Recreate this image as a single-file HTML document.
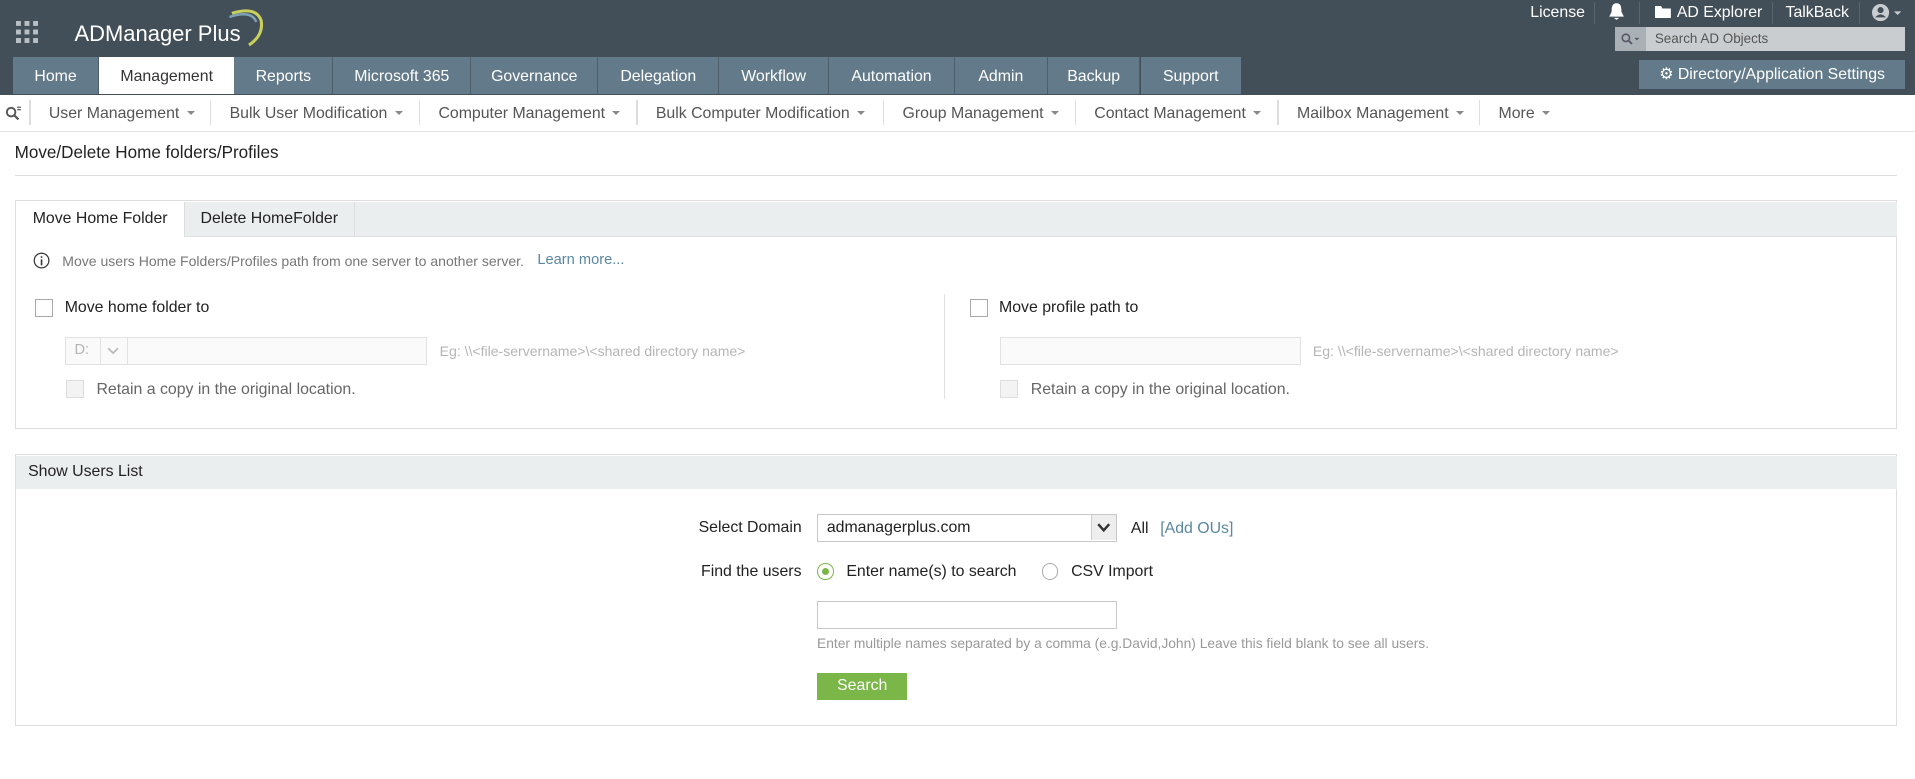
<!DOCTYPE html>
<html><head><meta charset="utf-8"><style>
html,body{margin:0;padding:0;background:#fff;}
body{width:1568px;height:638px;zoom:1.2213;position:relative;overflow:hidden;font-family:"Liberation Sans",sans-serif;font-size:13px;color:#333;}
.a{position:absolute;white-space:nowrap;}
.hdr{position:absolute;left:0;top:0;width:1568px;height:78px;background:#434f58;}
.tab{position:absolute;top:47px;height:30px;line-height:32px;background:#627a89;color:#fff;text-align:center;border-right:1px solid #4d5f6b;}
.sub{position:absolute;top:93px;transform:translateY(-50%);color:#555;}
.car{display:inline-block;width:0;height:0;border-left:4px solid transparent;border-right:4px solid transparent;border-top:4px solid #888;margin-left:6px;vertical-align:middle;}
.vs{position:absolute;top:82px;width:1px;height:20px;background:#ddd;}
.cb{position:absolute;width:13px;height:13px;border:1px solid #aaa;background:#fff;}
.gray{color:#b5b5b5;}
</style></head><body>
<div class="hdr"></div>
<svg class="a" style="left:13px;top:17px" width="18" height="18"><g fill="#b8c0c6"><rect x="0" y="0" width="4" height="4"/><rect x="7" y="0" width="4" height="4"/><rect x="14" y="0" width="4" height="4"/><rect x="0" y="7" width="4" height="4"/><rect x="7" y="7" width="4" height="4"/><rect x="14" y="7" width="4" height="4"/><rect x="0" y="14" width="4" height="4"/><rect x="7" y="14" width="4" height="4"/><rect x="0" y="14" width="4" height="4"/><rect x="14" y="14" width="4" height="4"/></g></svg>
<div class="a" style="left:61px;top:17px;font-size:18px;color:#fff;">ADManager Plus</div>
<svg class="a" style="left:186px;top:5px" width="34" height="36"><path d="M4 6 Q24 0 28 12 Q30 24 18 32" stroke="#c8cf5a" stroke-width="2.5" fill="none"/><path d="M2 9 Q20 3 24 13" stroke="#7ea3b5" stroke-width="2" fill="none"/></svg>
<div class="a" style="left:1253px;top:3px;color:#fff;">License</div>
<div class="a" style="left:1305px;top:2px;width:1px;height:18px;background:#5a666e"></div>
<svg class="a" style="left:1317px;top:2px" width="14" height="16"><path d="M7 1 C3 1 3 5 3 8 L1 12 L13 12 L11 8 C11 5 11 1 7 1Z M5 13 Q7 16 9 13Z" fill="#fff"/></svg>
<div class="a" style="left:1342px;top:2px;width:1px;height:18px;background:#5a666e"></div>
<svg class="a" style="left:1355px;top:5px" width="13" height="10"><path d="M0 0 H5 L6 2 H13 V10 H0Z" fill="#fff"/></svg>
<div class="a" style="left:1373px;top:3px;color:#fff;">AD Explorer</div>
<div class="a" style="left:1451px;top:2px;width:1px;height:18px;background:#5a666e"></div>
<div class="a" style="left:1462px;top:3px;color:#fff;">TalkBack</div>
<div class="a" style="left:1522px;top:2px;width:1px;height:18px;background:#5a666e"></div>
<svg class="a" style="left:1533px;top:3px" width="26" height="14"><circle cx="7" cy="7" r="7" fill="#c9cdd0"/><circle cx="7" cy="5" r="2.5" fill="#434f58"/><path d="M2.5 11 Q7 6 11.5 11" fill="#434f58"/><path d="M18 6 H24 L21 9Z" fill="#c9cdd0"/></svg>
<div class="a" style="left:1322px;top:22px;width:238px;height:20px;background:#c9cdd0;"></div>
<div class="a" style="left:1322px;top:22px;width:26px;height:20px;background:#aab1b6;"></div>
<svg class="a" style="left:1327px;top:27px" width="16" height="10"><circle cx="4" cy="4" r="3" stroke="#556" stroke-width="1.3" fill="none"/><path d="M6 6 L9 9" stroke="#556" stroke-width="1.5"/><path d="M11 4 H15 L13 6Z" fill="#556"/></svg>
<div class="a" style="left:1355px;top:25px;font-size:11px;color:#555;">Search AD Objects</div>
<div class="tab" style="left:11px;width:69px;">Home</div>
<div class="tab" style="left:81px;width:111px;background:#fff;color:#333;border:none;">Management</div>
<div class="tab" style="left:192px;width:80px;">Reports</div>
<div class="tab" style="left:273px;width:112px;">Microsoft 365</div>
<div class="tab" style="left:386px;width:103px;">Governance</div>
<div class="tab" style="left:490px;width:98px;">Delegation</div>
<div class="tab" style="left:589px;width:89px;">Workflow</div>
<div class="tab" style="left:679px;width:102px;">Automation</div>
<div class="tab" style="left:782px;width:75px;">Admin</div>
<div class="tab" style="left:858px;width:75px;">Backup</div>
<div class="tab" style="left:934px;width:82px;border:none;">Support</div>
<div class="a" style="left:1342px;top:49px;width:218px;height:24px;line-height:25px;background:#627a89;color:#fff;text-align:center;">&#9881; Directory/Application Settings</div>
<div class="a" style="left:0;top:107px;width:1568px;height:1px;background:#e2e2e2"></div>
<svg class="a" style="left:4px;top:87px" width="13" height="12"><circle cx="5" cy="5" r="3.5" stroke="#555" stroke-width="1.6" fill="none"/><path d="M7.5 7.5 L11 11" stroke="#555" stroke-width="1.8"/><path d="M10 1 H13 M10 3 H13" stroke="#555"/></svg>
<div class="vs" style="left:24px"></div>
<div class="sub" style="left:40px">User Management<span class="car"></span></div>
<div class="vs" style="left:172px"></div>
<div class="sub" style="left:188px">Bulk User Modification<span class="car"></span></div>
<div class="vs" style="left:343px"></div>
<div class="sub" style="left:359px">Computer Management<span class="car"></span></div>
<div class="vs" style="left:521px"></div>
<div class="sub" style="left:537px">Bulk Computer Modification<span class="car"></span></div>
<div class="vs" style="left:723px"></div>
<div class="sub" style="left:739px">Group Management<span class="car"></span></div>
<div class="vs" style="left:880px"></div>
<div class="sub" style="left:896px">Contact Management<span class="car"></span></div>
<div class="vs" style="left:1046px"></div>
<div class="sub" style="left:1062px">Mailbox Management<span class="car"></span></div>
<div class="vs" style="left:1211px"></div>
<div class="sub" style="left:1227px">More<span class="car"></span></div>
<div class="a" style="left:12px;top:117px;font-size:14px;color:#222;">Move/Delete Home folders/Profiles</div>
<div class="a" style="left:12px;top:143px;width:1541px;height:1px;background:#ddd"></div>

<div class="a" style="left:12px;top:164px;width:1540px;height:186px;border:1px solid #ddd;"></div>
<div class="a" style="left:13px;top:165px;width:1540px;height:28px;background:#ebeeef;border-bottom:1px solid #e0e0e0;"></div>
<div class="a" style="left:13px;top:165px;width:138px;height:29px;background:#fff;border-right:1px solid #ddd;line-height:28px;text-align:center;color:#222;">Move Home Folder</div>
<div class="a" style="left:151px;top:165px;width:139px;height:28px;line-height:28px;text-align:center;color:#222;border-right:1px solid #ddd;">Delete HomeFolder</div>
<svg class="a" style="left:27px;top:206px" width="14" height="14"><circle cx="7" cy="7" r="6" stroke="#333" fill="none"/><path d="M7 6 V11 M7 3.5 V4.8" stroke="#333" stroke-width="1.3"/></svg>
<div class="a" style="left:51px;top:207px;font-size:11.5px;color:#777;">Move users Home Folders/Profiles path from one server to another server.</div>
<div class="a" style="left:440px;top:206px;font-size:12px;color:#5b87a0;">Learn more...</div>
<div class="cb" style="left:29px;top:245px;"></div>
<div class="a" style="left:53px;top:245px;color:#222;">Move home folder to</div>
<div class="a" style="left:773px;top:241px;width:1px;height:86px;background:#e0e0e0"></div>
<div class="a" style="left:53px;top:276px;width:295px;height:21px;border:1px solid #e2e2e2;background:#fafafa;"></div>
<div class="a" style="left:82px;top:276px;width:1px;height:23px;background:#e2e2e2"></div>
<div class="a" style="left:104px;top:276px;width:1px;height:23px;background:#e2e2e2"></div>
<div class="a gray" style="left:61px;top:280px;font-size:12px;">D:</div>
<svg class="a" style="left:88px;top:284px" width="10" height="7"><path d="M1 1 L5 5 L9 1" stroke="#bbb" stroke-width="1.5" fill="none"/></svg>
<div class="a gray" style="left:360px;top:281px;font-size:11.5px;">Eg: \\&lt;file-servername&gt;\&lt;shared directory name&gt;</div>
<div class="cb" style="left:54px;top:311px;border-color:#ddd;background:#f3f3f3;"></div>
<div class="a" style="left:79px;top:312px;color:#666;">Retain a copy in the original location.</div>
<div class="cb" style="left:794px;top:245px;"></div>
<div class="a" style="left:818px;top:245px;color:#222;">Move profile path to</div>
<div class="a" style="left:819px;top:276px;width:245px;height:21px;border:1px solid #e2e2e2;background:#fafafa;"></div>
<div class="a gray" style="left:1075px;top:281px;font-size:11.5px;">Eg: \\&lt;file-servername&gt;\&lt;shared directory name&gt;</div>
<div class="cb" style="left:819px;top:311px;border-color:#ddd;background:#f3f3f3;"></div>
<div class="a" style="left:844px;top:312px;color:#666;">Retain a copy in the original location.</div>

<div class="a" style="left:12px;top:372px;width:1540px;height:221px;border:1px solid #ddd;"></div>
<div class="a" style="left:13px;top:373px;width:1540px;height:27px;background:#ebeeef;"></div>
<div class="a" style="left:23px;top:379px;color:#222;">Show Users List</div>
<div class="a" style="left:572px;top:425px;color:#222;">Select Domain</div>
<div class="a" style="left:669px;top:421px;width:244px;height:21px;border:1px solid #c8c8c8;"></div>
<div class="a" style="left:893px;top:422px;width:20px;height:20px;background:#eee;border-left:1px solid #ccc;"></div>
<svg class="a" style="left:898px;top:428px" width="11" height="8"><path d="M1 1 L5.5 6 L10 1" stroke="#333" stroke-width="2" fill="none"/></svg>
<div class="a" style="left:677px;top:425px;color:#222;">admanagerplus.com</div>
<div class="a" style="left:926px;top:426px;color:#222;">All</div>
<div class="a" style="left:950px;top:426px;color:#5b87a0;">[Add OUs]</div>
<div class="a" style="left:574px;top:461px;color:#222;">Find the users</div>
<div class="a" style="left:669px;top:461px;width:12px;height:12px;border:1px solid #7ab648;border-radius:50%;"></div>
<div class="a" style="left:673px;top:465px;width:6px;height:6px;background:#7ab648;border-radius:50%;"></div>
<div class="a" style="left:693px;top:461px;color:#222;">Enter name(s) to search</div>
<div class="a" style="left:853px;top:461px;width:12px;height:12px;border:1px solid #aaa;border-radius:50%;"></div>
<div class="a" style="left:877px;top:461px;color:#222;">CSV Import</div>
<div class="a" style="left:669px;top:492px;width:244px;height:21px;border:1px solid #c8c8c8;"></div>
<div class="a" style="left:669px;top:521px;font-size:11.3px;color:#999;">Enter multiple names separated by a comma (e.g.David,John) Leave this field blank to see all users.</div>
<div class="a" style="left:669px;top:551px;width:74px;height:22px;background:#7ab648;color:#fff;text-align:center;line-height:22px;">Search</div>
</body></html>
